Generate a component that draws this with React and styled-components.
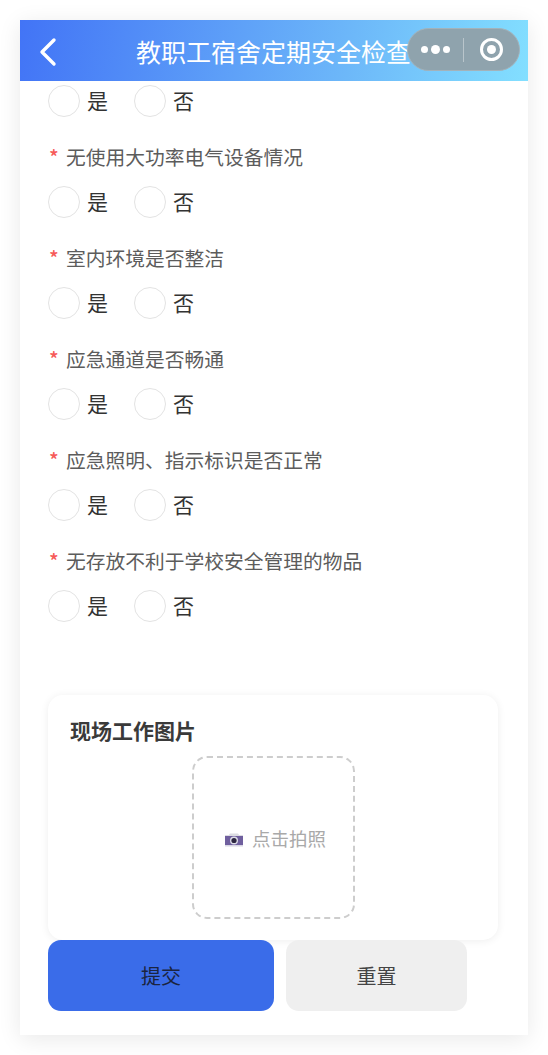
import React from "react";
import styled, { createGlobalStyle } from "styled-components";

const GlobalStyle = createGlobalStyle`
    html, body {
        margin: 0;
        padding: 0;
        background: #fff;
        font-family: "Noto Sans CJK SC", "Noto Sans", sans-serif;
    }
    * {
        box-sizing: border-box;
    }
`;

const Page = styled.div`
    width: 548px;
    height: 1055px;
    padding: 20px 20px 20px;
    overflow: hidden;
`;

const Phone = styled.div`
    position: relative;
    height: 1015px;
    background: #fff;
    box-shadow: 0 4px 22px rgba(0, 0, 0, 0.09);
    display: flex;
    flex-direction: column;
    overflow: hidden;
`;

const Header = styled.div`
    height: 61px;
    flex: none;
    display: flex;
    align-items: center;
    justify-content: center;
    background: linear-gradient(100deg, #4274f6 0%, #6db8f9 65%, #83dfff 100%);
`;

const BackButton = styled.svg`
    position: absolute;
    left: 17px;
    top: 17px;
`;

const Title = styled.div`
    color: #fff;
    font-size: 25px;
    line-height: 34px;
    white-space: nowrap;
    margin-left: -1px;
`;

const Capsule = styled.div`
    position: absolute;
    left: 387px;
    top: 8px;
    width: 113px;
    height: 43px;
    border-radius: 22px;
    background: #8fa3ad;
    border: 1px solid #a3b2ba;
    display: flex;
    align-items: center;
`;

const CapsuleDots = styled.div`
    width: 42px;
    display: flex;
    align-items: center;
    justify-content: flex-end;
    gap: 3px;
`;

const Dot = styled.span`
    width: ${({big}) => big ? 9 : 7}px;
    height: ${({big}) => big ? 9 : 7}px;
    border-radius: 50%;
    background: #fff;
`;

const CapsuleLine = styled.div`
    width: 1px;
    height: 24px;
    background: #b9c5cb;
    margin-left: 13px;
`;

const CapsuleTarget = styled.div`
    width: 23px;
    height: 23px;
    margin-left: 16px;
    border-radius: 50%;
    border: 3px solid #fff;
    display: flex;
    align-items: center;
    justify-content: center;
    &:before {
        content: "";
        width: 9px;
        height: 9px;
        border-radius: 50%;
        background: #fff;
    }
`;

const Body = styled.div`
    padding: 4px 30px 0 28px;
    display: flex;
    flex-direction: column;
`;

const Question = styled.div`
    margin-top: 25px;
`;

const Label = styled.div`
    display: flex;
    align-items: center;
    height: 30px;
    margin-bottom: 14px;
    padding-bottom: 1px;
    font-size: 19.75px;
    color: #5c5c5c;
`;

const Star = styled.span`
    width: 18px;
    color: #f65a5a;
    font-size: 20px;
    font-weight: 500;
    padding-left: 1px;
`;

const Options = styled.div`
    display: flex;
    height: 32px;
    align-items: center;
`;

const Option = styled.div`
    width: 86px;
    display: flex;
    align-items: center;
`;

const Radio = styled.span`
    width: 32px;
    height: 32px;
    flex: none;
    border-radius: 50%;
    background: #fff;
    border: 1.5px solid #e3e3e3;
    margin-right: 7px;
`;

const OptionText = styled.span`
    font-size: 21px;
    line-height: 32px;
    padding-bottom: 3px;
    color: #333;
`;

const Card = styled.div`
    margin-top: 73px;
    height: 245px;
    border-radius: 15px;
    background: #fff;
    box-shadow: 0 1px 9px rgba(0, 0, 0, 0.07);
    padding: 20px 22px 0;
`;

const CardTitle = styled.div`
    font-size: 21px;
    line-height: 30px;
    font-weight: 700;
    color: #3a3a3a;
`;

const Upload = styled.div`
    width: 163px;
    height: 163px;
    margin: 11px auto 0;
    padding-left: 4px;
    border: 2px dashed #cdcdcd;
    border-radius: 15px;
    display: flex;
    align-items: center;
    justify-content: center;
    gap: 8px;
`;

const CameraSvg = styled.svg`
    margin-top: 5px;
`;

const UploadText = styled.span`
    font-size: 18.5px;
    color: #a9a9a9;
`;

const Actions = styled.div`
    display: flex;
    gap: 12px;
`;

const Button = styled.div`
    width: ${({primary}) => primary ? 226 : 181}px;
    height: 71px;
    border-radius: 13px;
    display: flex;
    align-items: center;
    justify-content: center;
    font-size: 20px;
    background: ${({primary}) => primary ? "#3a6ce9" : "#efefef"};
    color: ${({primary}) => primary ? "#1b2440" : "#444"};
`;

const questions = [
    "无使用大功率电气设备情况",
    "室内环境是否整洁",
    "应急通道是否畅通",
    "应急照明、指示标识是否正常",
    "无存放不利于学校安全管理的物品",
];

const YesNo = () => <Options>
    <Option><Radio/><OptionText>是</OptionText></Option>
    <Option><Radio/><OptionText>否</OptionText></Option>
</Options>;

const CameraIcon = () => <CameraSvg width="20" height="16" viewBox="0 0 20 16">
    <path d="M1 3h4l1-1.5h8L15 3h4v1H1z" fill="#dcdce2"/>
    <rect x="1" y="4" width="18" height="9" fill="#6f5f9e"/>
    <rect x="1" y="13" width="18" height="1.5" fill="#d8d6e4"/>
    <circle cx="10" cy="8.5" r="4" fill="#dcdce6"/>
    <circle cx="10" cy="8.5" r="2.6" fill="#2d2740"/>
</CameraSvg>;

const App = () => {
    return <Page>
        <GlobalStyle/>
        <Phone>
            <Header>
                <BackButton width="22" height="30" viewBox="0 0 22 30">
                    <path d="M17 3 5 15l12 12" fill="none" stroke="#fff" strokeWidth="3.4" strokeLinecap="round" strokeLinejoin="round"/>
                </BackButton>
                <Title>教职工宿舍定期安全检查</Title>
                <Capsule>
                    <CapsuleDots><Dot/><Dot big/><Dot/></CapsuleDots>
                    <CapsuleLine/>
                    <CapsuleTarget/>
                </Capsule>
            </Header>
            <Body>
                <YesNo/>
                {questions.map(q => <Question key={q}>
                    <Label><Star>*</Star>{q}</Label>
                    <YesNo/>
                </Question>)}
                <Card>
                    <CardTitle>现场工作图片</CardTitle>
                    <Upload>
                        <CameraIcon/>
                        <UploadText>点击拍照</UploadText>
                    </Upload>
                </Card>
                <Actions>
                    <Button primary>提交</Button>
                    <Button>重置</Button>
                </Actions>
            </Body>
        </Phone>
    </Page>;
};

export default App;
